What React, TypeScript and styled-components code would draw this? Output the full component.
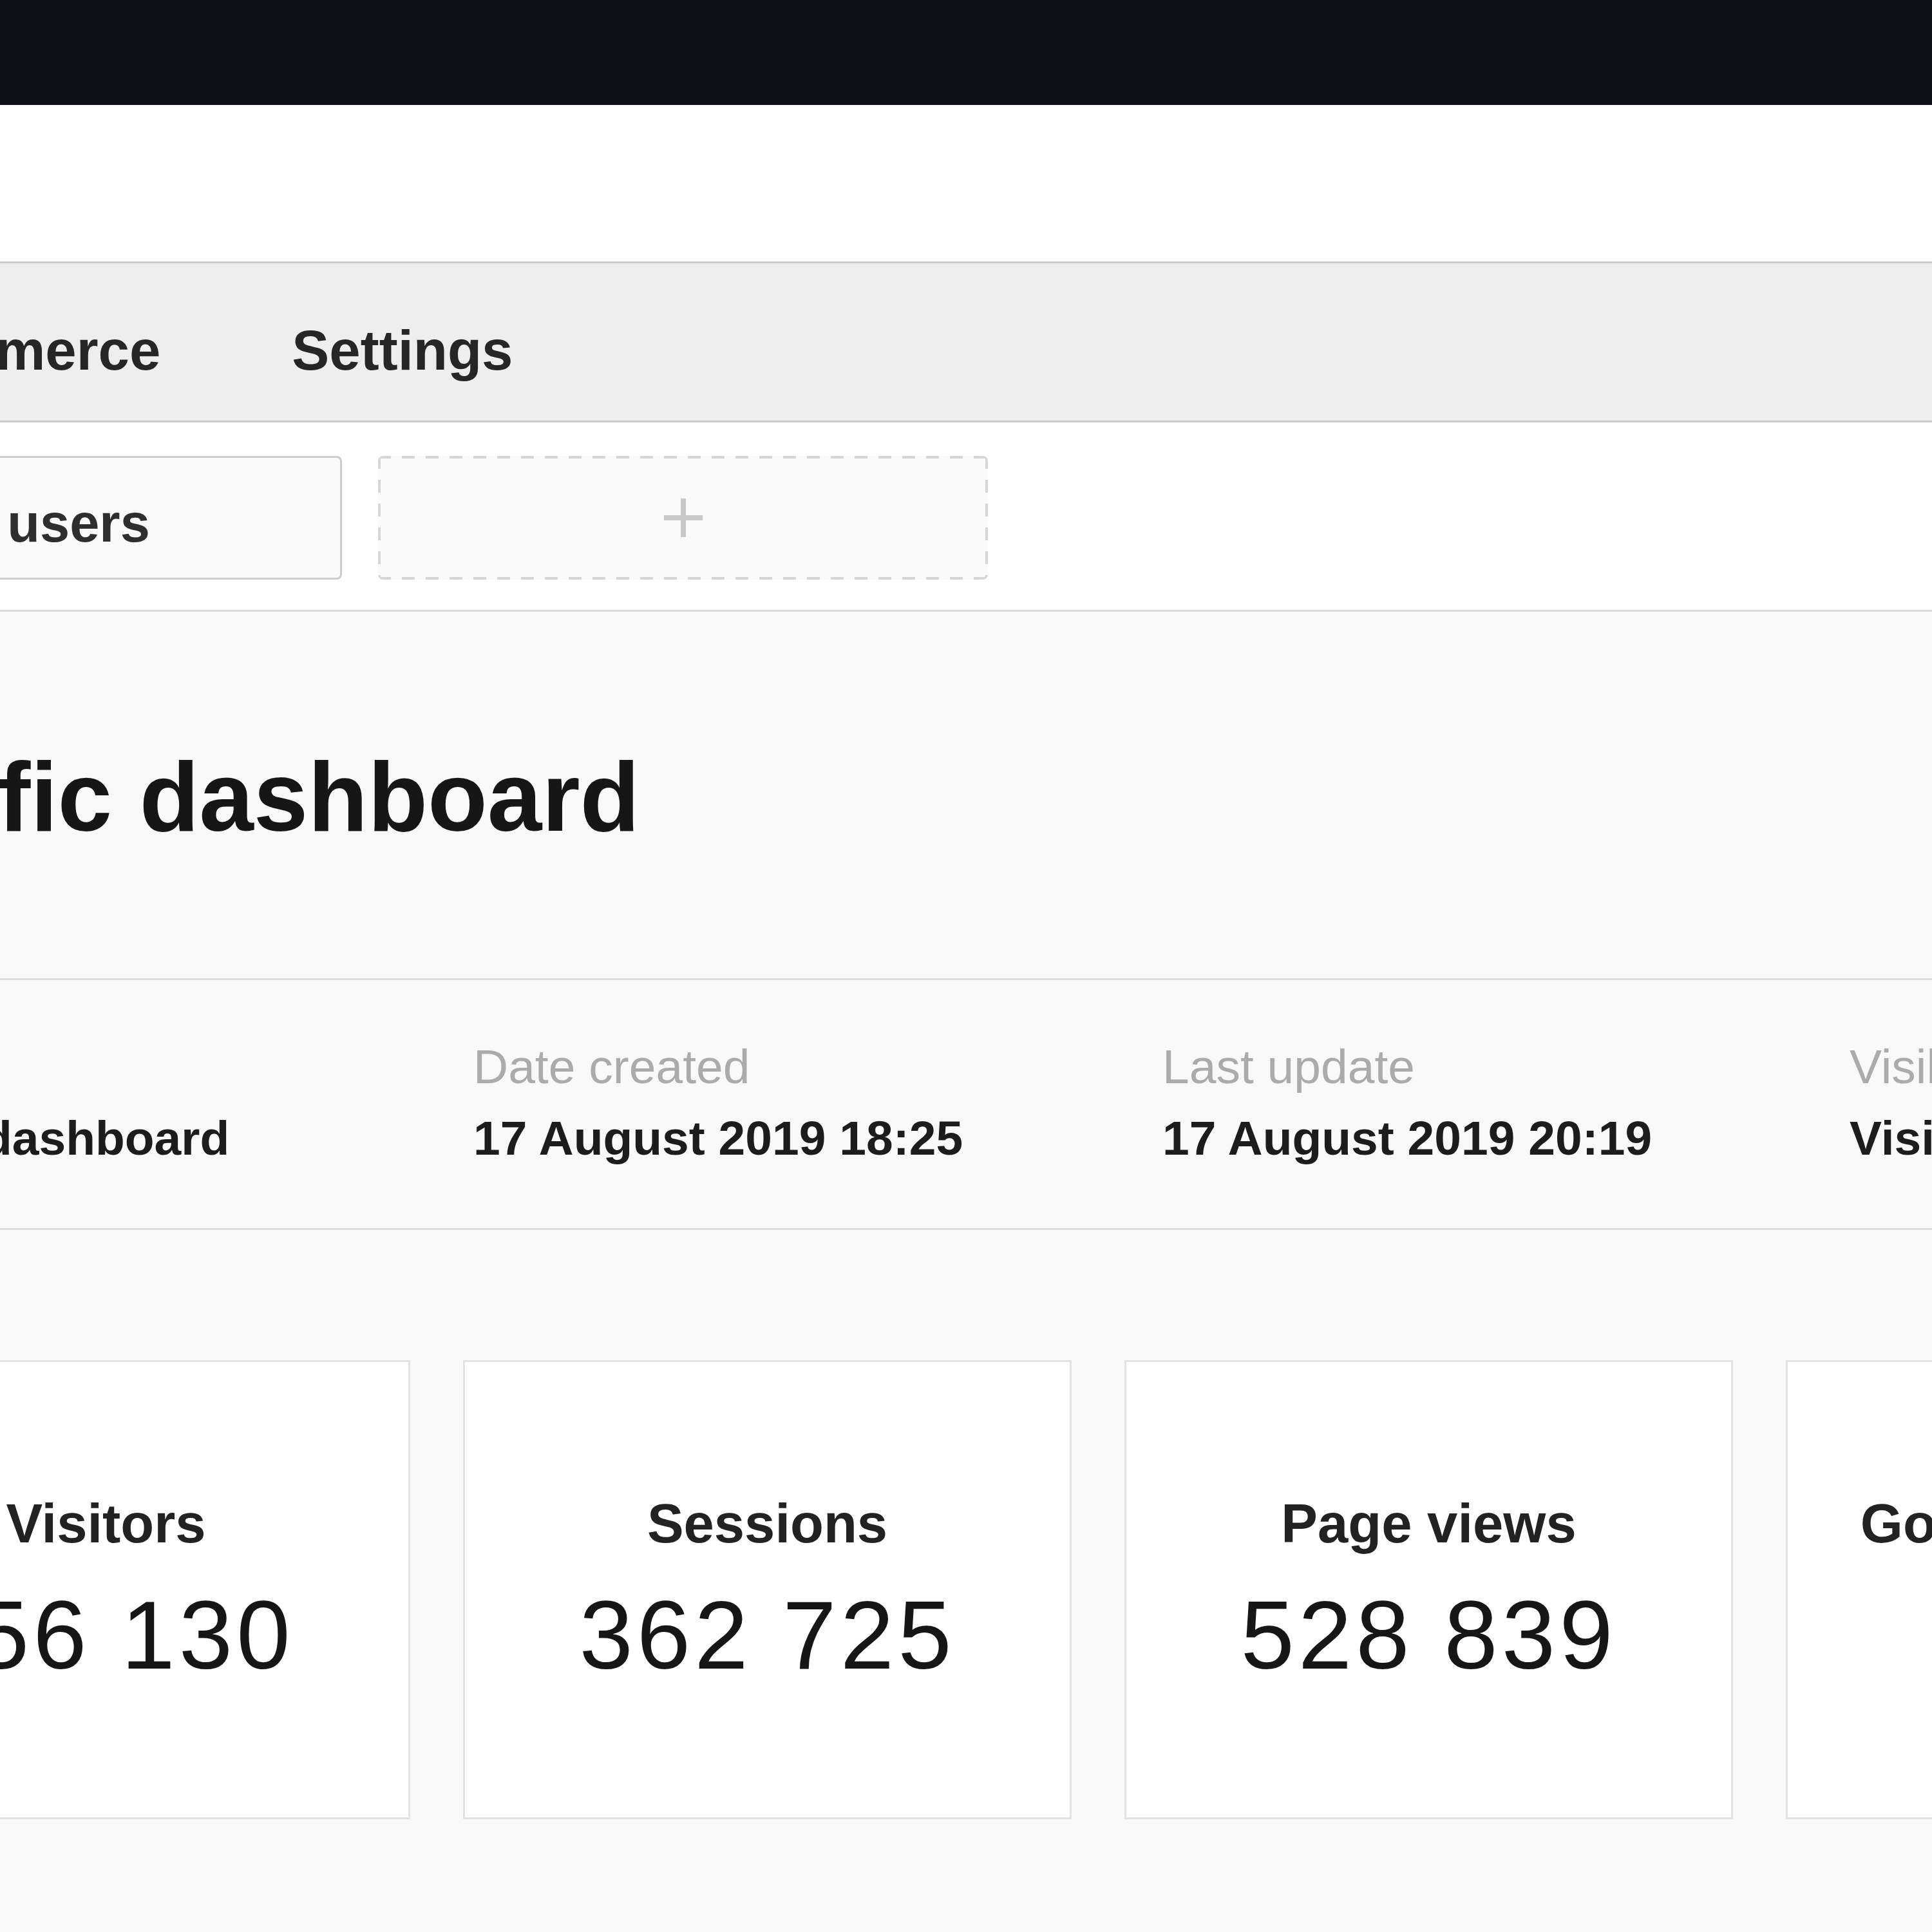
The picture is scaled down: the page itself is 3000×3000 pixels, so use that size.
import React from "react";
import styled, { createGlobalStyle } from "styled-components";

const Global = createGlobalStyle`
  html, body {
    margin: 0;
    padding: 0;
    background: #f9f9f9;
    overflow: hidden;
  }
  body {
    font-family: "Liberation Sans", Arial, Helvetica, sans-serif;
    width: 3000px;
  }
  * { box-sizing: border-box; }
`;

const Page = styled.div`
  width: 3420px;
  margin-left: -420px;
  display: flex;
  flex-direction: column;
`;

const TopBar = styled.div`
  height: 163px;
  background: #0d1014;
`;

const HeaderSpace = styled.div`
  height: 243px;
  background: #ffffff;
`;

const TabBar = styled.nav`
  height: 250px;
  background: #eeeeee;
  border-top: 3px solid #cbcbcb;
  border-bottom: 3px solid #cbcbcb;
  display: flex;
  align-items: flex-start;
  gap: 204px;
  padding: 91px 0 0 176px;
`;

const Tab = styled.span`
  font-size: 87px;
  line-height: 1;
  font-weight: 700;
  color: #262626;
  white-space: nowrap;
`;

const ChipRow = styled.div`
  background: #ffffff;
  display: flex;
  gap: 56px;
  padding: 52px 0 47px 4px;
  border-bottom: 3px solid #dddddd;
`;

const Chip = styled.div`
  width: 947px;
  height: 192px;
  border: 3px solid #cdcdcd;
  border-radius: 8px;
  background: #fafafa;
  display: flex;
  align-items: center;
  justify-content: center;
  padding-top: 16px;
  font-size: 83px;
  line-height: 1;
  font-weight: 700;
  color: #2e2e2e;
  white-space: nowrap;
`;

const AddChip = styled.div`
  width: 947px;
  height: 192px;
  border-radius: 8px;
  background-color: #fafafa;
  background-image:
    repeating-linear-gradient(90deg, #d6d6d6 0 20px, transparent 20px 37px),
    repeating-linear-gradient(90deg, #d6d6d6 0 20px, transparent 20px 37px),
    repeating-linear-gradient(180deg, #d6d6d6 0 20px, transparent 20px 37px),
    repeating-linear-gradient(180deg, #d6d6d6 0 20px, transparent 20px 37px);
  background-size: 100% 4px, 100% 4px, 4px 100%, 4px 100%;
  background-position: 0 0, 0 100%, 0 0, 100% 0;
  background-repeat: no-repeat;
  display: flex;
  align-items: center;
  justify-content: center;
`;

const Plus = styled.svg`
  width: 64px;
  height: 64px;
  display: block;
`;

const TitleSection = styled.section`
  padding: 211px 0 206px 138px;
  border-bottom: 3px solid #dddddd;
`;

const Title = styled.h1`
  margin: 0;
  font-size: 152px;
  line-height: 1;
  font-weight: 700;
  color: #161616;
  white-space: nowrap;
`;

const MetaSection = styled.section`
  display: grid;
  grid-template-columns: 1008px 1070px 1067px 1fr;
  padding: 97px 0 102px 147px;
  border-bottom: 3px solid #dddddd;
`;

const MetaItem = styled.div`
  display: flex;
  flex-direction: column;
  gap: 36px;
  white-space: nowrap;
`;

const MetaLabel = styled.span`
  font-size: 75px;
  line-height: 1;
  color: #ababab;
`;

const MetaValue = styled.span`
  font-size: 75px;
  line-height: 1;
  font-weight: 700;
  color: #1c1c1c;
`;

const CardSection = styled.section`
  display: flex;
  gap: 82px;
  padding: 202px 0 300px 112px;
`;

const Card = styled.div`
  flex: 0 0 945px;
  height: 713px;
  background: #ffffff;
  border: 3px solid #e3e3e3;
  display: flex;
  flex-direction: column;
  align-items: center;
  justify-content: center;
  gap: 56px;
  white-space: nowrap;
`;

const CardLabel = styled.span`
  font-size: 85px;
  line-height: 1;
  font-weight: 700;
  color: #222222;
`;

const CardValue = styled.span`
  font-size: 150px;
  line-height: 1;
  letter-spacing: 6px;
  color: #161616;
`;

const meta = [
  { label: "Name", value: "Traffic dashboard" },
  { label: "Date created", value: "17 August 2019 18:25" },
  { label: "Last update", value: "17 August 2019 20:19" },
  { label: "Visibility", value: "Visible to everyone" },
];

const stats = [
  { label: "Visitors", value: "256 130" },
  { label: "Sessions", value: "362 725" },
  { label: "Page views", value: "528 839" },
  { label: "Goal conversions", value: "2 947" },
];

export default function App() {
  return (
    <>
      <Global />
      <Page>
        <TopBar />
        <HeaderSpace />
        <TabBar>
          <Tab>Ecommerce</Tab>
          <Tab>Settings</Tab>
        </TabBar>
        <ChipRow>
          <Chip>All users</Chip>
          <AddChip>
            <Plus viewBox="0 0 64 64">
              <path d="M32 2v60M2 32h60" stroke="#c9c9c9" strokeWidth="8" fill="none" />
            </Plus>
          </AddChip>
        </ChipRow>
        <TitleSection>
          <Title>Traffic dashboard</Title>
        </TitleSection>
        <MetaSection>
          {meta.map((m) => (
            <MetaItem key={m.label}>
              <MetaLabel>{m.label}</MetaLabel>
              <MetaValue>{m.value}</MetaValue>
            </MetaItem>
          ))}
        </MetaSection>
        <CardSection>
          {stats.map((s) => (
            <Card key={s.label}>
              <CardLabel>{s.label}</CardLabel>
              <CardValue>{s.value}</CardValue>
            </Card>
          ))}
        </CardSection>
      </Page>
    </>
  );
}
